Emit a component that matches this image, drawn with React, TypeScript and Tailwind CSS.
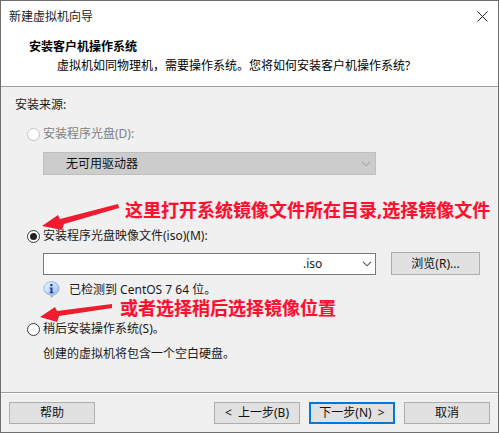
const FONT = "font-['Noto_Sans','Noto_Sans_CJK_SC',sans-serif]";

function Radio({ checked, disabled }: { checked?: boolean; disabled?: boolean }) {
  return (
    <span
      className={`flex h-[13px] w-[13px] shrink-0 items-center justify-center rounded-full border bg-white ${
        disabled ? "border-[#c4c4c4]" : "border-[#333b45]"
      }`}
    >
      {checked && <span className="h-[7px] w-[7px] rounded-full bg-[#222222]" />}
    </span>
  );
}

function Chevron({ color }: { color: string }) {
  return (
    <svg width="10" height="6" viewBox="0 0 10 6" fill="none" stroke={color} strokeWidth="1.1">
      <path d="M1 0.8 L5 4.8 L9 0.8" />
    </svg>
  );
}

function Btn({ label, primary, className = "" }: { label: string; primary?: boolean; className?: string }) {
  return (
    <div
      className={`flex h-[22px] w-[86px] items-center justify-center whitespace-nowrap bg-[#e1e1e1] text-[12px] text-[#111111] [word-spacing:3px] ${
        primary ? "border-2 border-[#0078d7]" : "border border-[#adadad]"
      } ${className}`}
    >
      {label}
    </div>
  );
}

function InfoIcon() {
  return (
    <svg width="17" height="17" viewBox="0 0 17 17" className="shrink-0">
      <defs>
        <linearGradient id="ig" x1="0" y1="0" x2="1" y2="1">
          <stop offset="0" stopColor="#f4f9ff" />
          <stop offset="1" stopColor="#8fb6e6" />
        </linearGradient>
      </defs>
      <path
        d="M8.5 0.8 C12.9 0.8 16 3.6 16 7.4 C16 10.6 13.7 12.9 11.2 13.6 L8.4 16.4 L8 13.9 C4 13.8 1 11 1 7.4 C1 3.6 4.1 0.8 8.5 0.8 Z"
        fill="url(#ig)"
        stroke="#7ea6d8"
        strokeWidth="0.8"
      />
      <rect x="7.3" y="3" width="2.2" height="2.2" fill="#1b3f9c" />
      <path d="M6.6 6.4 H9.5 V11 H10.4 V12.2 H6.6 V11 H7.5 V7.6 H6.6 Z" fill="#1b3f9c" />
    </svg>
  );
}

const noteText =
  "absolute whitespace-nowrap text-[18px] font-bold leading-[24px] text-[#fb1030] [text-shadow:0_0_1px_#ffb0c0]";

export default function App() {
  return (
    <div
      className={`relative flex h-[433px] w-[499px] flex-col overflow-hidden border border-[#6e6e6e] bg-[#f0f0f0] text-[12px] leading-[16px] text-[#1a1a1a] ${FONT}`}
    >
      {/* header */}
      <div className="h-[86px] shrink-0 border-b border-[#a0a0a0] bg-white">
        <div className="flex h-[30px] items-center justify-between pl-[8px] pr-[10px] pt-[1px]">
          <span>新建虚拟机向导</span>
          <svg width="11" height="11" viewBox="0 0 11 11" stroke="#222222" strokeWidth="1" fill="none">
            <path d="M0.5 0.5 L10.5 10.5 M10.5 0.5 L0.5 10.5" />
          </svg>
        </div>
        <div className="pl-[28px] pt-[8px] font-bold text-black">安装客户机操作系统</div>
        <div className="pl-[56px] pt-[3px] text-black">{"虚拟机如同物理机\uFF0C需要操作系统。您将如何安装客户机操作系统?"}</div>
      </div>

      {/* body */}
      <div className="flex min-h-0 flex-1 flex-col pl-[14px]">
        <div className="mt-[10px]">安装来源:</div>

        <div className="ml-[12px] mt-[13px] flex items-center gap-[3px] text-[#7f7f7f]">
          <Radio disabled />
          <span>安装程序光盘(D):</span>
        </div>

        <div className="ml-[28px] mt-[10px] flex h-[23px] w-[333px] items-center justify-between border border-[#bfbfbf] bg-[#cccccc] pl-[22px] pr-[4px] text-[#111111]">
          <span>无可用驱动器</span>
          <Chevron color="#a8a8a8" />
        </div>

        <div className="ml-[12px] mt-[53px] flex items-center gap-[3px]">
          <Radio checked />
          <span>安装程序光盘映像文件(iso)(M):</span>
        </div>

        <div className="ml-[28px] mt-[8px] flex items-center">
          <div className="flex h-[22px] w-[333px] items-center justify-between border border-[#7a7a7a] bg-white pl-[259px] pr-[3px]">
            <span>.iso</span>
            <Chevron color="#555555" />
          </div>
          <Btn label="浏览(R)..." className="ml-[15px] !w-[89px] !h-[23px]" />
        </div>

        <div className="ml-[28px] mt-[6px] flex items-center gap-[9px]">
          <InfoIcon />
          <span>已检测到 CentOS 7 64 位。</span>
        </div>

        <div className="ml-[12px] mt-[23px] flex items-center gap-[3px]">
          <Radio />
          <span>稍后安装操作系统(S)。</span>
        </div>

        <div className="ml-[28px] mt-[9px]">创建的虚拟机将包含一个空白硬盘。</div>
      </div>

      {/* footer */}
      <div className="flex h-[40px] shrink-0 items-start justify-between border-t border-[#a0a0a0] pl-[8px] pr-[8px] pt-[9px] shadow-[inset_0_1px_0_#ffffff]">
        <Btn label="帮助" />
        <div className="flex">
          <Btn label="< 上一步(B)" />
          <Btn label="下一步(N) >" primary className="ml-[9px]" />
          <Btn label="取消" className="ml-[9px]" />
        </div>
      </div>

      {/* annotations */}
      <span className={`${noteText} left-[124px] top-[197px]`}>这里打开系统镜像文件所在目录,选择镜像文件</span>
      <span className={`${noteText} left-[119px] top-[295px]`}>或者选择稍后选择镜像位置</span>
      <svg className="absolute left-0 top-0" width="497" height="431" viewBox="1 1 497 431" fill="#ee1c2e">
        <polygon points="118,204 119,208 64,224 62,230 42,226 58,215 60,219" />
        <polygon points="112,304 112,308 59,316 57,322 40,317 55,307 57,311" />
      </svg>
    </div>
  );
}
